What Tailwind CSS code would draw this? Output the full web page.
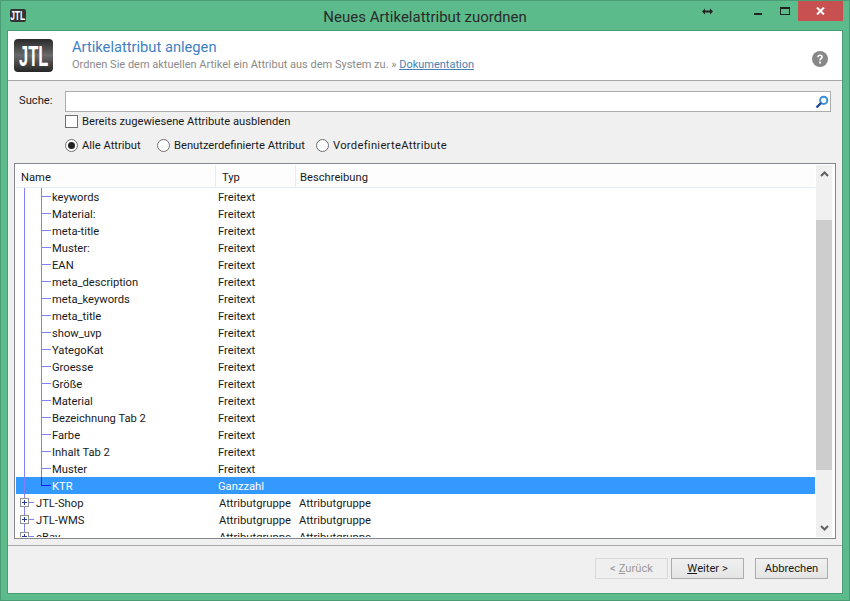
<!DOCTYPE html>
<html lang="en">

<head>
    <meta charset="UTF-8">
    <title>Neues Artikelattribut zuordnen</title>
    <script src="https://cdn.jsdelivr.net/npm/@tailwindcss/browser@4"></script>
</head>

<body class="font-['Roboto',sans-serif] text-[11.2px] text-[#1a1a1a] overflow-hidden">
    <div class="w-[850px] h-[601px] bg-[#5bbb8b] border border-[#4a9c74] flex flex-col px-[6px] pb-[6px]">
        <!-- Title bar -->
        <div class="h-[29px] shrink-0 flex items-start relative">
            <div class="w-[16px] h-[13px] mt-[8px] ml-[3px] rounded-[2px] bg-[#333] text-white text-[12px] font-bold flex items-center justify-center font-['Liberation_Sans'] overflow-hidden"><span class="scale-x-[.7]">JTL</span></div>
            <div class="absolute left-[-7px] right-[-7px] top-[5px] text-center text-[15px] text-[#2a2a2a]">Neues Artikelattribut zuordnen</div>
            <div class="ml-auto flex items-start">
                <svg class="mt-[7px] mr-[41px]" width="11" height="7" viewBox="0 0 11 7"><path d="M0 3.5l3-3v2h5v-2l3 3-3 3v-2H3v2z" fill="#222"/></svg>
                <div class="w-[8px] h-[2px] bg-[#222] mt-[12px] mr-[18px]"></div>
                <div class="w-[10px] h-[8px] border border-[#222] border-t-2 mt-[6px] mr-[8px]"></div>
                <div class="w-[45px] h-[20px] bg-[#c75050] flex items-center justify-center">
                    <svg width="9" height="8" viewBox="0 0 9 8"><path d="M1 0.5l7 7M8 0.5l-7 7" stroke="#fff" stroke-width="2"/></svg>
                </div>
            </div>
        </div>

        <!-- Client area -->
        <div class="flex-1 bg-[#f0f0f0] border border-[#4a9c74] flex flex-col min-h-0">
            <div class="h-[50px] shrink-0 bg-white border-b border-[#a8a8a8] flex items-start">
                <div class="w-[39px] h-[33px] mt-[8px] ml-[6px] rounded-[4px] bg-gradient-to-b from-[#2a2a2a] via-[#6a6a6a] to-[#262626] text-white text-[30px] font-bold flex items-center justify-center font-['Liberation_Sans'] overflow-hidden"><span class="scale-x-[.55]">JTL</span></div>
                <div class="ml-[19px] mt-[7px]">
                    <div class="text-[14.7px] leading-[19px] text-[#3f7fc4]">Artikelattribut anlegen</div>
                    <div class="text-[11px] leading-[15px] text-[#8a8a8a]">Ordnen Sie dem aktuellen Artikel ein Attribut aus dem System zu. » <span class="text-[#4a7fb5] underline">Dokumentation</span></div>
                </div>
                <svg class="ml-auto mt-[20px] mr-[14px]" width="16" height="16" viewBox="0 0 16 16"><circle cx="8" cy="8" r="8" fill="#888"/><path d="M5.2 6.2c0-1.8 1.2-2.6 2.8-2.6s2.9.8 2.9 2.3c0 2-2.1 1.9-2.1 3.5H7.2c0-2.2 1.9-2.3 1.9-3.4 0-.6-.4-1-1.1-1s-1.2.4-1.2 1.2zM7.2 10.6h1.7v1.8H7.2z" fill="#fff"/></svg>
            </div>

            <div class="h-[82px] shrink-0">
                <div class="flex items-center pt-[10px] ml-[11px]">
                    <span class="w-[46px] -mt-px">Suche:</span>
                    <div class="w-[766px] h-[21px] bg-white border border-[#acacac] flex justify-end items-center pr-[1px]">
                        <svg width="14" height="14" viewBox="0 0 14 14"><circle cx="8.7" cy="5.3" r="3.6" fill="none" stroke="#3a8fd6" stroke-width="2"/><path d="M6 8l-4.5 4.5" stroke="#1f4a93" stroke-width="2.4"/></svg>
                    </div>
                </div>
                <label class="flex items-center mt-[3px] ml-[57px] h-[13px]">
                    <span class="w-[13px] h-[13px] bg-white border border-[#707070] mr-[4px]"></span>
                    <span class="pt-[2px]">Bereits zugewiesene Attribute ausblenden</span>
                </label>
                <div class="flex items-center mt-[11px] ml-[57px] h-[13px]">
                    <span class="w-[13px] h-[13px] rounded-full bg-white border border-[#707070] flex items-center justify-center mr-[4px]"><span class="w-[7px] h-[7px] rounded-full bg-[#222]"></span></span>
                    <span class="w-[75px] pt-[2px]">Alle Attribut</span>
                    <span class="w-[13px] h-[13px] rounded-full bg-white border border-[#707070] mr-[4px]"></span>
                    <span class="w-[142px] pt-[2px]">Benutzerdefinierte Attribut</span>
                    <span class="w-[13px] h-[13px] rounded-full bg-white border border-[#707070] mr-[4px]"></span>
                    <span class="pt-[2px] tracking-[.3px]">VordefinierteAttribute</span>
                </div>
            </div>

            <!-- Tree list -->
            <div class="h-[376px] shrink-0 mx-[6px] bg-white border border-[#828790] flex p-px">
                <div class="w-[799px] flex flex-col min-w-0 overflow-hidden">
                    <div class="h-[23px] shrink-0 flex bg-[#fdfdfd] border-b border-[#e4ecf7] leading-[25px]">
                        <div class="w-[200px] pl-[5px] border-r border-[#e4ecf7]">Name</div>
                        <div class="w-[80px] pl-[6px] border-r border-[#e4ecf7]">Typ</div>
                        <div class="flex-1 pl-[4px]">Beschreibung</div>
                    </div>
                    <div id="rows" class="flex-1 overflow-hidden"></div>
                </div>
                <div class="w-[16px] ml-px bg-[#f0f0f0] flex flex-col items-center">
                    <svg class="mt-[5px]" width="9" height="7" viewBox="0 0 9 7"><path d="M1 6l3.5-3.5L8 6" fill="none" stroke="#606060" stroke-width="2"/></svg>
                    <div class="w-full h-[250px] mt-[43px] bg-[#cdcdcd]"></div>
                    <svg class="mt-auto mb-[5px]" width="9" height="7" viewBox="0 0 9 7"><path d="M1 1l3.5 3.5L8 1" fill="none" stroke="#606060" stroke-width="2"/></svg>
                </div>
            </div>

            <div class="flex-1 mt-[6px] border-t border-[#a8a8a8] flex items-start pt-[12px] pl-[587px]">
                <div class="w-[73px] h-[21px] pt-[2px] border border-[#d9d9d9] bg-[#efefef] text-[#9a9a9a] flex items-center justify-center">&lt; <span class="underline ml-[3px]">Z</span>urück</div>
                <div class="w-[73px] h-[21px] pt-[2px] ml-[3px] border border-[#acacac] bg-gradient-to-b from-[#f0f0f0] to-[#e5e5e5] flex items-center justify-center"><span class="underline">W</span>eiter &gt;</div>
                <div class="w-[73px] h-[21px] pt-[2px] ml-[11px] border border-[#acacac] bg-gradient-to-b from-[#f0f0f0] to-[#e5e5e5] flex items-center justify-center">Abbrechen</div>
            </div>
        </div>
    </div>

    <script>
        const children = ['keywords', 'Material:', 'meta-title', 'Muster:', 'EAN', 'meta_description', 'meta_keywords',
            'meta_title', 'show_uvp', 'YategoKat', 'Groesse', 'Größe', 'Material', 'Bezeichnung Tab 2', 'Farbe',
            'Inhalt Tab 2', 'Muster', 'KTR'];
        const groups = ['JTL-Shop', 'JTL-WMS', 'eBay'];
        let html = '';

        children.forEach(name => {
            const selected = name === 'KTR';
            html += `
                <div class="h-[17px] leading-[19px] flex relative ${selected ? 'bg-[#3399ff] text-white' : ''}">
                    <span class="absolute left-[8px] top-0 bottom-0 w-px bg-[#7f7fff]"></span>
                    <span class="absolute left-[25px] top-0 w-px ${selected ? 'h-[9px] bg-[#1a1aff]' : 'bottom-0 bg-[#7f7fff]'}"></span>
                    <span class="absolute left-[25px] top-[8px] w-[10px] h-px ${selected ? 'bg-[#1a1aff]' : 'bg-[#7f7fff]'}"></span>
                    <span class="w-[201px] pl-[36px] shrink-0">${name}</span>
                    <span class="pl-[1px]">${selected ? 'Ganzzahl' : 'Freitext'}</span>
                </div>`;
        });

        groups.forEach(name => {
            html += `
                <div class="h-[17px] leading-[19px] flex relative">
                    <span class="absolute left-[8px] top-0 bottom-0 w-px bg-[#7f7fff]"></span>
                    <span class="absolute left-[13px] top-[8px] w-[5px] h-px bg-[#7f7fff]"></span>
                    <span class="absolute left-[4px] top-[4px] w-[9px] h-[9px] bg-white border border-[#909090] flex items-center justify-center">
                        <span class="absolute w-[5px] h-px bg-[#2a3f8f]"></span>
                        <span class="absolute w-px h-[5px] bg-[#2a3f8f]"></span>
                    </span>
                    <span class="w-[201px] pl-[20px] shrink-0">${name}</span>
                    <span class="w-[80px] shrink-0 pl-[2px]">Attributgruppe</span>
                    <span class="pl-[2px]">Attributgruppe</span>
                </div>`;
        });

        document.getElementById('rows').innerHTML = html;
    </script>
</body>

</html>
